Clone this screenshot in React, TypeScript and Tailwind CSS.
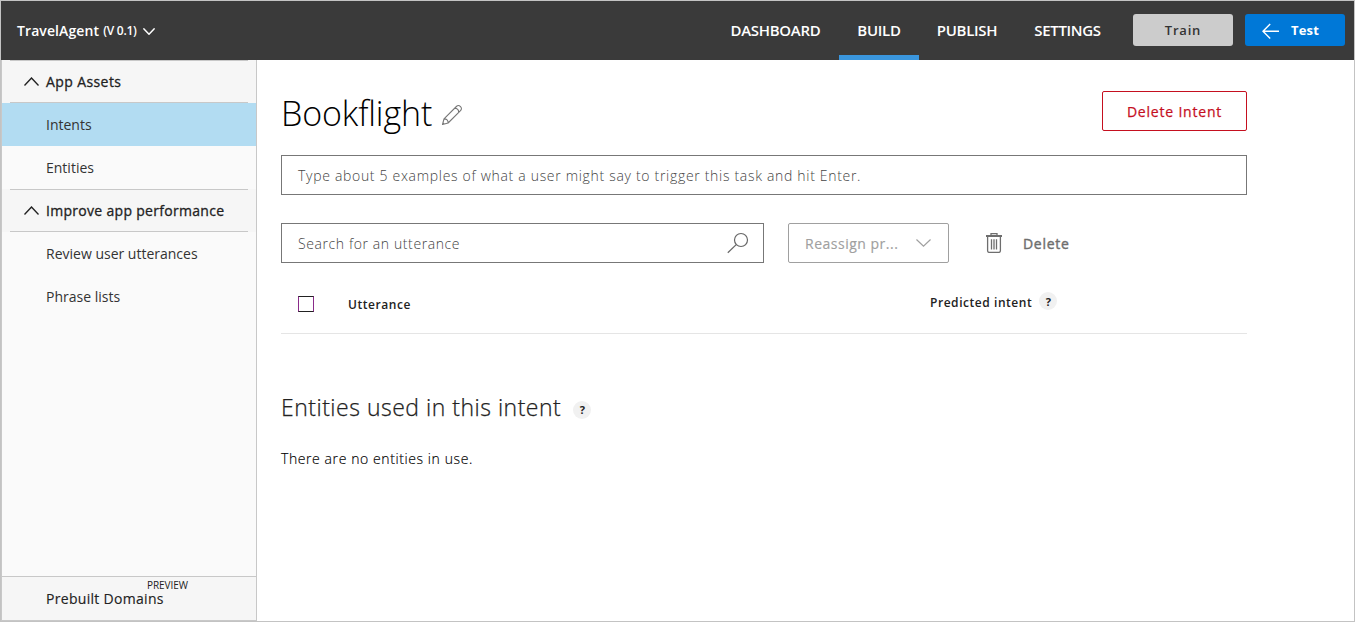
import React from "react";

const Chevron = ({ up = false, className = "" }: { up?: boolean; className?: string }) => (
  <svg className={className} viewBox="0 0 16 9" fill="none" stroke="currentColor" preserveAspectRatio="none">
    <path d={up ? "M0.5 8.5 8 1l7.5 7.5" : "M0.5 0.5 8 8l7.5-7.5"} vectorEffect="non-scaling-stroke" />
  </svg>
);

const Help = ({ className = "" }: { className?: string }) => (
  <span className={`flex h-[18px] w-[18px] shrink-0 items-center justify-center rounded-full bg-[#f1f1f1] text-[11px] leading-none font-bold tracking-normal text-[#222] ${className}`}>
    ?
  </span>
);

const SectionHead = ({ label, spacing }: { label: string; spacing: string }) => (
  <div className="flex h-full w-full items-center bg-[#f6f6f6] px-2">
    <div className="flex h-full w-full items-center border-y border-[#c8c8c8] pl-[14px] text-[#222]">
      <Chevron up className="h-[9px] w-[15px] [stroke-width:1.4]" />
      <span className={`ml-[7px] text-[14px] whitespace-nowrap [-webkit-text-stroke:0.3px_currentColor] ${spacing}`}>{label}</span>
    </div>
  </div>
);

const NavItem = ({ label, active = false }: { label: string; active?: boolean }) => (
  <div className={`flex h-[43px] shrink-0 items-center pl-11 text-[14px] whitespace-nowrap text-[#333] ${active ? "bg-[#b2dcf2]" : ""}`}>
    {label}
  </div>
);

const tabs = [
  { label: "DASHBOARD", box: "w-[127px]" },
  { label: "BUILD", box: "w-[80px]" },
  { label: "PUBLISH", box: "w-[96px]" },
  { label: "SETTINGS", box: "w-[105px]" },
];

const Header = () => (
  <header className="flex h-[59px] shrink-0 bg-[#3a3a3a] pr-[9px] text-white">
    <div className="flex items-center pl-4 whitespace-nowrap">
      <span className="text-[14px] font-semibold tracking-[0.1px]">TravelAgent</span>
      <span className="ml-1 pt-px text-[12px] font-semibold tracking-[-0.25px]">(V 0.1)</span>
      <Chevron className="mt-[2px] ml-[6px] h-[7px] w-3 [stroke-width:1.5]" />
    </div>
    <nav className="ml-auto flex">
      {tabs.map((t) => (
        <div
          key={t.label}
          className={`flex items-center justify-center border-b-[5px] pt-[5px] text-[15px] font-semibold tracking-[-0.3px] ${t.box} ${t.label === "BUILD" ? "border-[#3a96dd]" : "border-transparent"}`}
        >
          {t.label}
        </div>
      ))}
    </nav>
    <button className="mt-[13px] ml-[13px] h-8 w-[100px] rounded-[3px] bg-[#ccc] pt-px text-[13px] font-semibold tracking-[0.8px] text-[#333]">Train</button>
    <button className="mt-[13px] ml-3 flex h-8 w-[100px] items-center rounded-[3px] bg-[#0078d7] pt-px pl-[17px] text-[13px] font-bold tracking-[0.2px]">
      <svg className="h-4 w-[17px]" viewBox="0 0 17 16" fill="none" stroke="currentColor" strokeWidth="1.4">
        <path d="M17 8.2H1M8.2 1 1 8.2l7.2 7.2" />
      </svg>
      <span className="ml-3">Test</span>
    </button>
  </header>
);

const Sidebar = () => (
  <aside className="flex w-[256px] shrink-0 flex-col border-x border-[#c8c8c8] bg-[#fafafa]">
    <div className="h-[43px] shrink-0">
      <SectionHead label="App Assets" spacing="tracking-[0.4px]" />
    </div>
    <NavItem label="Intents" active />
    <NavItem label="Entities" />
    <div className="h-[43px] shrink-0">
      <SectionHead label="Improve app performance" spacing="tracking-[0.3px]" />
    </div>
    <NavItem label="Review user utterances" />
    <NavItem label="Phrase lists" />
    <div className="relative mt-auto flex h-[45px] shrink-0 items-center border-y border-[#c8c8c8] bg-[#f6f6f6] pl-11">
      <span className="text-[14px] tracking-[0.3px] whitespace-nowrap text-[#222] [-webkit-text-stroke:0.15px_currentColor]">Prebuilt Domains</span>
      <span className="absolute top-[2px] left-[145px] text-[10px] leading-[13px] tracking-[-0.05px] text-[#222]">PREVIEW</span>
    </div>
  </aside>
);

const Pencil = () => (
  <svg className="h-[22px] w-[22px]" viewBox="0 0 22 22" fill="none" stroke="#777" strokeWidth="1.1" strokeLinejoin="round">
    <path d="M1.5 20.5 3 14.9 15.4 2.5c2.7-2.7 6.8 1.4 4.1 4.1L7.1 19zM3 14.9c2.6-.1 4.2 1.6 4.1 4.1M13.6 4.3c2.5 0 4.1 1.6 4.1 4.1M1.9 18.7l1.4 1.4" />
  </svg>
);

const Magnifier = () => (
  <svg className="h-[22px] w-[22px]" viewBox="0 0 22 22" fill="none" stroke="#666" strokeWidth="1.2">
    <circle cx="14" cy="8" r="6.5" />
    <path d="M9.2 12.6.8 20.7" />
  </svg>
);

const Trash = () => (
  <svg className="h-5 w-4" viewBox="0 0 16 20" fill="none" stroke="#6e6e6e" strokeWidth="1.3">
    <path d="M0 3h16" strokeWidth="2" />
    <path d="M5 2.5V.7h6v1.8M1.6 3.5v14.2c0 1 .6 1.7 1.6 1.7h9.6c1 0 1.6-.7 1.6-1.7V3.5" />
    <path d="M5.5 6.2v10.2M8 6.2v10.2M10.5 6.2v10.2" />
  </svg>
);

const Main = () => (
  <main className="flex min-w-0 flex-1 flex-col pt-[31px] pr-[107px] pl-6">
    <div className="flex h-10 items-start justify-between">
      <div className="flex">
        <h1 className="mt-[-1px] text-[34px] leading-[46px] font-light tracking-[-0.12px] whitespace-nowrap text-black">Bookflight</h1>
        <span className="mt-[13px] ml-[9px]">
          <Pencil />
        </span>
      </div>
      <button className="h-10 w-[145px] rounded-[2px] border border-[#c50f1f] text-[14px] tracking-[0.8px] text-[#c50f1f] [-webkit-text-stroke:0.25px_currentColor]">Delete Intent</button>
    </div>

    <div className="mt-6 flex h-10 items-center border border-[#777] px-4 text-[14px] font-light tracking-[0.69px] whitespace-nowrap text-[#444]">
      Type about 5 examples of what a user might say to trigger this task and hit Enter.
    </div>

    <div className="mt-7 flex h-10 items-center">
      <div className="flex h-10 w-[483px] items-center justify-between border border-[#777] pr-[14px] pl-4">
        <span className="text-[14px] font-light tracking-[0.6px] whitespace-nowrap text-[#444]">Search for an utterance</span>
        <Magnifier />
      </div>
      <div className="ml-6 flex h-10 w-[161px] items-center justify-between rounded-[2px] border border-[#a0a0a0] px-4 text-[#a0a0a0]">
        <span className="text-[14px] tracking-[0.5px] whitespace-nowrap [-webkit-text-stroke:0.15px_currentColor]">Reassign pr...</span>
        <Chevron className="mr-px h-2 w-[15px] [stroke-width:1.2]" />
      </div>
      <div className="ml-[37px] flex items-center">
        <Trash />
        <span className="ml-[21px] text-[14px] tracking-[0.7px] text-[#6e6e6e] [-webkit-text-stroke:0.4px_currentColor]">Delete</span>
      </div>
    </div>

    <div className="flex h-[71px] items-start border-b border-[#e5e5e5] text-[12px] leading-4 font-semibold tracking-[0.55px] text-[#222]">
      <span className="mt-[33px] ml-[17px] h-4 w-4 border border-x-[#8a2b8a] border-y-[#222]" />
      <span className="mt-[34px] ml-[34px] w-[582px]">Utterance</span>
      <span className="mt-8 whitespace-nowrap">Predicted intent</span>
      <Help className="mt-[29px] ml-[7px]" />
    </div>

    <div className="mt-[55px] flex h-9 items-center">
      <h2 className="text-[23px] font-light tracking-[0.5px] whitespace-nowrap text-[#222] [-webkit-text-stroke:0.25px_currentColor]">Entities used in this intent</h2>
      <Help className="mt-[5px] ml-3" />
    </div>
    <p className="mt-6 text-[14px] leading-5 font-light tracking-[0.59px] text-black [-webkit-text-stroke:0.15px_currentColor]">There are no entities in use.</p>
  </main>
);

export default function App() {
  return (
    <div className="flex h-[622px] w-[1355px] flex-col overflow-hidden border border-[#c3c3c3] bg-white font-['Open_Sans','Noto_Sans',sans-serif]">
      <Header />
      <div className="flex min-h-0 flex-1">
        <Sidebar />
        <Main />
      </div>
    </div>
  );
}
